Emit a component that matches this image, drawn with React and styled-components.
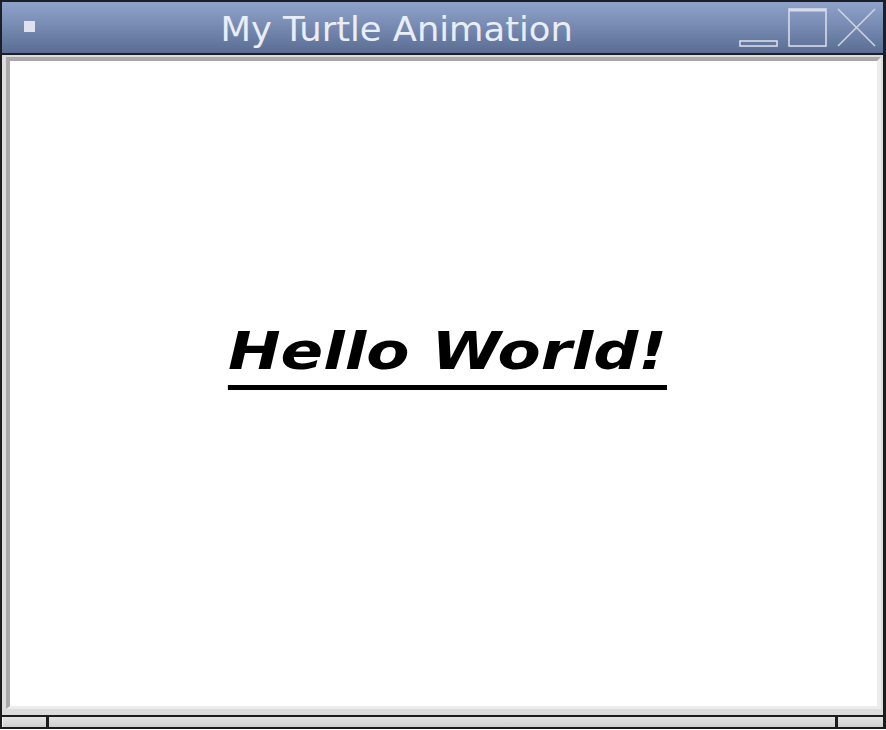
import React from "react";
import styled, { createGlobalStyle } from "styled-components";

const GlobalStyle = createGlobalStyle`
  html, body {
    margin: 0;
    padding: 0;
    background: #ffffff;
  }
`;

export default function App() {
  return (
    <>
      <GlobalStyle />
      <Window>
        <TitleBar>
          <MenuButton>
            <MenuDot />
          </MenuButton>
          <Title>
            <TitleText>My Turtle Animation</TitleText>
          </Title>
          <Controls>
            <svg width="40" height="40" viewBox="0 0 40 40">
              <rect x="1" y="33" width="37" height="5" fill="none" stroke="#d6dbe8" strokeWidth="1.6" />
            </svg>
            <svg width="40" height="40" viewBox="0 0 40 40">
              <rect x="1" y="1" width="37" height="37" fill="none" stroke="#d6dbe8" strokeWidth="1.6" />
              <rect x="1" y="1" width="37" height="2.5" fill="#d6dbe8" />
            </svg>
            <svg width="40" height="40" viewBox="0 0 40 40">
              <path d="M1 1 L38 38 M38 1 L1 38" stroke="#d0d6e4" strokeWidth="1.5" fill="none" />
            </svg>
          </Controls>
        </TitleBar>
        <Frame>
          <Canvas>
            <Greeting>Hello World!</Greeting>
          </Canvas>
        </Frame>
        <ResizeBar>
          <Grip $width={43} />
          <Grip $flex />
          <Grip $width={45} />
        </ResizeBar>
      </Window>
    </>
  );
}

const Window = styled.div`
  width: 886px;
  height: 729px;
  display: flex;
  flex-direction: column;
  box-sizing: border-box;
  font-family: "DejaVu Sans", sans-serif;
`;

const TitleBar = styled.div`
  height: 55px;
  flex: none;
  box-sizing: border-box;
  display: flex;
  align-items: stretch;
  border: 2px solid #1c1f26;
  border-right-width: 3px;
  background: linear-gradient(#8fa2c9, #7b8fb6 40%, #5a6d93);
`;

const MenuButton = styled.div`
  width: 38px;
  display: flex;
  align-items: center;
  justify-content: flex-end;
  padding-bottom: 2px;
`;

const MenuDot = styled.div`
  width: 11px;
  height: 11px;
  background: #dfe2ee;
  margin-right: 5px;
`;

const Title = styled.div`
  flex: 1;
  display: flex;
  align-items: center;
  justify-content: center;
  padding: 3px 0 0 14px;
`;

const TitleText = styled.span`
  color: #e9edf6;
  font-size: 33px;
  line-height: 1;
  display: inline-block;
  transform: scaleX(1.07);
  white-space: nowrap;
`;

const Controls = styled.div`
  display: flex;
  align-items: flex-start;
  gap: 9px;
  padding: 6px 6px 0 0;
`;

const Frame = styled.div`
  flex: 1;
  display: flex;
  box-sizing: border-box;
  background: #dcdcdc;
  border-left: 2px solid #1c1c1c;
  border-right: 3px solid #1c1c1c;
  border-bottom: 2px solid #1c1c1c;
  padding: 2px 2px 6px 4px;
`;

const Canvas = styled.div`
  flex: 1;
  display: flex;
  align-items: center;
  justify-content: center;
  background: #ffffff;
  border-top: 4px solid #a9a9a9;
  border-left: 4px solid #a9a9a9;
  border-right: 4px solid #ececec;
  border-bottom: 3px solid #ececec;
  padding-bottom: 66px;
`;

const Greeting = styled.div`
  font-family: "DejaVu Sans", sans-serif;
  font-weight: bold;
  font-style: italic;
  font-size: 52px;
  color: #000;
  margin-left: 8px;
  text-decoration: underline;
  text-decoration-thickness: 5px;
  text-underline-offset: 16px;
  transform: scaleX(1.21);
  white-space: nowrap;
`;

const ResizeBar = styled.div`
  height: 12px;
  flex: none;
  display: flex;
  box-sizing: border-box;
  border-left: 2px solid #1c1c1c;
  border-right: 3px solid #1c1c1c;
  border-bottom: 2px solid #1c1c1c;
`;

const Grip = styled.div`
  ${(p) => (p.$flex ? "flex: 1;" : `width: ${p.$width}px;`)}
  background: linear-gradient(#e4e4e4, #cfcfcf);
  border-left: 1px solid #f4f4f4;
  & + & {
    border-left: 3px solid #1c1c1c;
  }
`;
